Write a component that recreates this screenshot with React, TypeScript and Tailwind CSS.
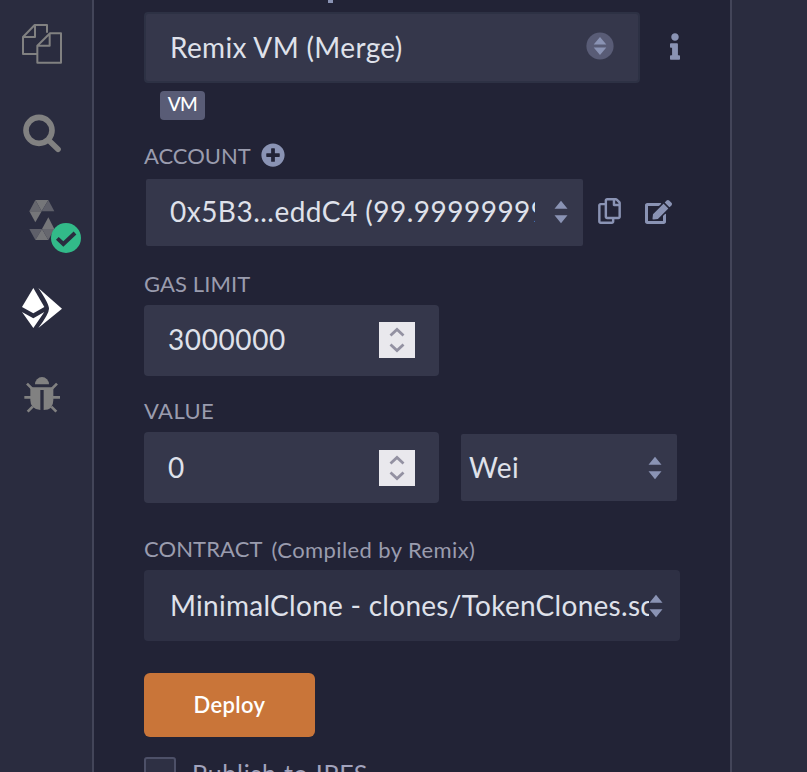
import React from "react";
import { FaRegCopy, FaEdit, FaInfo, FaPlusCircle } from "react-icons/fa";

function Arrows({ round = false }: { round?: boolean }) {
  if (round) {
    return (
      <svg className="mb-[3px] h-[28px] w-[28px] shrink-0" viewBox="0 0 28 28">
        <circle cx="14" cy="14" r="13.6" fill="#595c76" />
        <path d="M14 5 20.3 12.6H7.7zM14 23 20.3 15.4H7.7z" fill="#8a93b4" />
      </svg>
    );
  }
  return (
    <svg className="h-[24px] w-[14px] shrink-0" viewBox="0 0 14 24">
      <path d="M7 .8 13.5 8.8H.5zM7 23.2 13.5 15.2H.5z" fill="#8a93b4" />
    </svg>
  );
}

function Spinner() {
  return (
    <svg className="h-9 w-9 shrink-0 bg-[#e9e8ed]" viewBox="0 0 36 36" fill="none" stroke="#9391a2" strokeWidth="2.8">
      <path d="M11.5 13.5 18 7.5 24.5 13.5M11.5 22.5 18 28.5 24.5 22.5" />
    </svg>
  );
}

function Sidebar() {
  return (
    <aside className="flex h-full w-[94px] shrink-0 flex-col border-r-2 border-[#434559] bg-[#2a2c3f] pl-[20px] pt-[20px]">
      <svg className="h-[48px] w-[48px]" viewBox="60 60 144 144" fill="none" stroke="#818181" strokeWidth="6" strokeLinejoin="round">
        <path d="M111 162H69V111L104 75H141V98M69 111H105V75" />
        <path d="M112 188H183V100H150L112 137ZM112 137H149V100" />
      </svg>
      <svg className="mt-[42px] h-[48px] w-[48px]" viewBox="60 330 144 144" fill="none" stroke="#818181">
        <circle cx="117" cy="391" r="39" strokeWidth="17" />
        <path d="M146 421 174 448" strokeWidth="17" strokeLinecap="round" />
      </svg>
      <svg className="mt-[36px] h-[62px] w-[66px]" viewBox="60 42 198 186">
        <path d="M106 60H145L125 94Z" fill="#757679" />
        <path d="M145 60 163 94H125Z" fill="#5e5f69" />
        <path d="M106 60 125 94H88Z" fill="#66676e" />
        <path d="M88 94H125L106 127Z" fill="#757679" />
        <path d="M145 112 163 147H126Z" fill="#757679" />
        <path d="M88 147H126L106 180Z" fill="#5e5f69" />
        <path d="M126 147 145 180H106Z" fill="#757679" />
        <path d="M126 147H163L145 180Z" fill="#66676e" />
        <circle cx="198" cy="174" r="45" fill="#32ba89" />
        <path d="M172 175 190 192 225 159" fill="none" stroke="#2a2c3f" strokeWidth="12" />
      </svg>
      <svg className="mt-[30px] h-[44px] w-[44px]" viewBox="60 318 132 132" fill="#fff">
        <path d="M100 324 133 381 100 400 66 381Z" />
        <path d="M66 396 100 415 133 396 100 444Z" />
        <path d="M115 324 186 386 115 444Q147 401 147 386T115 324Z" />
      </svg>
      <svg className="mt-[44px] h-[44px] w-[44px]" viewBox="60 582 132 132" fill="#818181">
        <path d="M105 613a21 22 0 0 1 42 0Z" />
        <path d="M91 622H160V660Q160 690 131 690V630H121V690Q91 688 91 660Z" />
        <path d="M81 611 96 626M171 611 156 626M73 652H93M158 652H180M83 695 98 680M169 695 154 680" stroke="#818181" strokeWidth="8" />
      </svg>
    </aside>
  );
}

const label = "text-[22px] leading-[28px] text-[#9a9cae] whitespace-nowrap";
const value = "text-[28px] leading-[36px] text-[#dfe1ea] whitespace-nowrap";

export default function App() {
  return (
    <div className="flex h-[772px] w-[807px] overflow-hidden bg-[#2a2c3f] font-['Lato',sans-serif]">
      <Sidebar />
      <main className="flex h-full w-[638px] shrink-0 flex-col border-r-2 border-[#434559] bg-[#222336] pl-[50px]">
        <div className="ml-[184px] h-[3px] w-[5px] shrink-0 bg-[#8a93b4]" />
        <div className="mt-[9px] flex h-[71px] shrink-0 items-center">
          <div className="flex h-[71px] w-[496px] items-center justify-between rounded-[4px] border-2 border-[#2d3144] bg-[#35374b] pl-[24px] pr-[24px]">
            <span className={value + " pb-[2px] tracking-[0.35px]"}>Remix VM (Merge)</span>
            <Arrows round />
          </div>
          <FaInfo className="mb-[2px] ml-[30px] h-[27px] w-[10px] text-[#8a93b4]" />
        </div>
        <div className="ml-[16px] mt-[8px] flex h-[29px] w-[45px] shrink-0 items-center justify-center rounded-[4px] bg-[#595c76] pb-[2px] text-[19px] font-medium tracking-[-0.5px] text-white">
          VM
        </div>
        <div className="mt-[21px] flex h-[28px] shrink-0 items-center">
          <span className={label + " pt-[2px]"}>ACCOUNT</span>
          <FaPlusCircle className="ml-[10px] h-[24px] w-[24px] text-[#8a93b4]" />
        </div>
        <div className="ml-[2px] mt-[10px] flex h-[67px] shrink-0 items-center">
          <div className="flex h-[67px] w-[437px] items-center rounded-[2px] bg-[#35374b] pl-[24px]">
            <span className={value + " w-[365px] overflow-hidden pb-[4px] tracking-[0.48px]"}>0x5B3...eddC4 (99.99999999999)</span>
            <span className="ml-[19px] flex pb-px">
              <Arrows />
            </span>
          </div>
          <FaRegCopy className="mb-[3px] ml-[15px] h-[26px] w-[23px] text-[#8a93b4]" />
          <FaEdit className="mb-[2px] ml-[24px] h-[24px] w-[27px] text-[#8a93b4]" />
        </div>
        <div className={label + " mt-[24px] shrink-0 tracking-[0.1px]"}>GAS LIMIT</div>
        <div className="mt-[7px] flex h-[71px] w-[295px] shrink-0 items-center justify-between rounded-[4px] bg-[#35374b] px-[24px] pb-px">
          <span className={value + " pb-[3px] tracking-[0.6px]"}>3000000</span>
          <Spinner />
        </div>
        <div className={label + " mt-[21px] shrink-0 tracking-[0.4px]"}>VALUE</div>
        <div className="mt-[7px] flex h-[71px] shrink-0 items-center">
          <div className="flex h-[71px] w-[295px] items-center justify-between rounded-[4px] bg-[#35374b] px-[24px]">
            <span className={value + " pb-[2px]"}>0</span>
            <Spinner />
          </div>
          <div className="ml-[22px] flex h-[67px] w-[216px] items-center justify-between rounded-[2px] bg-[#35374b] pl-[8px] pr-[15px]">
            <span className={value + " pb-[2px] tracking-[0.4px]"}>Wei</span>
            <Arrows />
          </div>
        </div>
        <div className="mt-[32px] flex h-[28px] shrink-0 items-center">
          <span className={label + " tracking-[0.1px]"}>CONTRACT</span>
          <span className={label + " ml-[9px] pt-[2px] tracking-[0.4px]"}>(Compiled by Remix)</span>
        </div>
        <div className="mt-[7px] flex h-[71px] w-[536px] shrink-0 items-center rounded-[4px] bg-[#2e3044] pl-[26px]">
          <span className={value + " w-[479px] overflow-hidden pb-[2px] tracking-[0.28px]"}>MinimalClone - clones/TokenClones.sol</span>
          <Arrows />
        </div>
        <button className="mt-[32px] flex h-[64px] w-[171px] shrink-0 items-center justify-center rounded-[6px] bg-[#c97539] pb-[2px] text-[22px] font-semibold tracking-[0.35px] text-white">
          Deploy
        </button>
        <div className="mt-[20px] flex h-[32px] shrink-0 items-center">
          <span className="h-[32px] w-[32px] rounded-[3px] border-2 border-[#4d5068] bg-[#2e3044]" />
          <span className="ml-[16px] whitespace-nowrap text-[25px] leading-[32px] tracking-[0.75px] text-[#a2a3bd]">Publish to IPFS</span>
        </div>
      </main>
    </div>
  );
}
